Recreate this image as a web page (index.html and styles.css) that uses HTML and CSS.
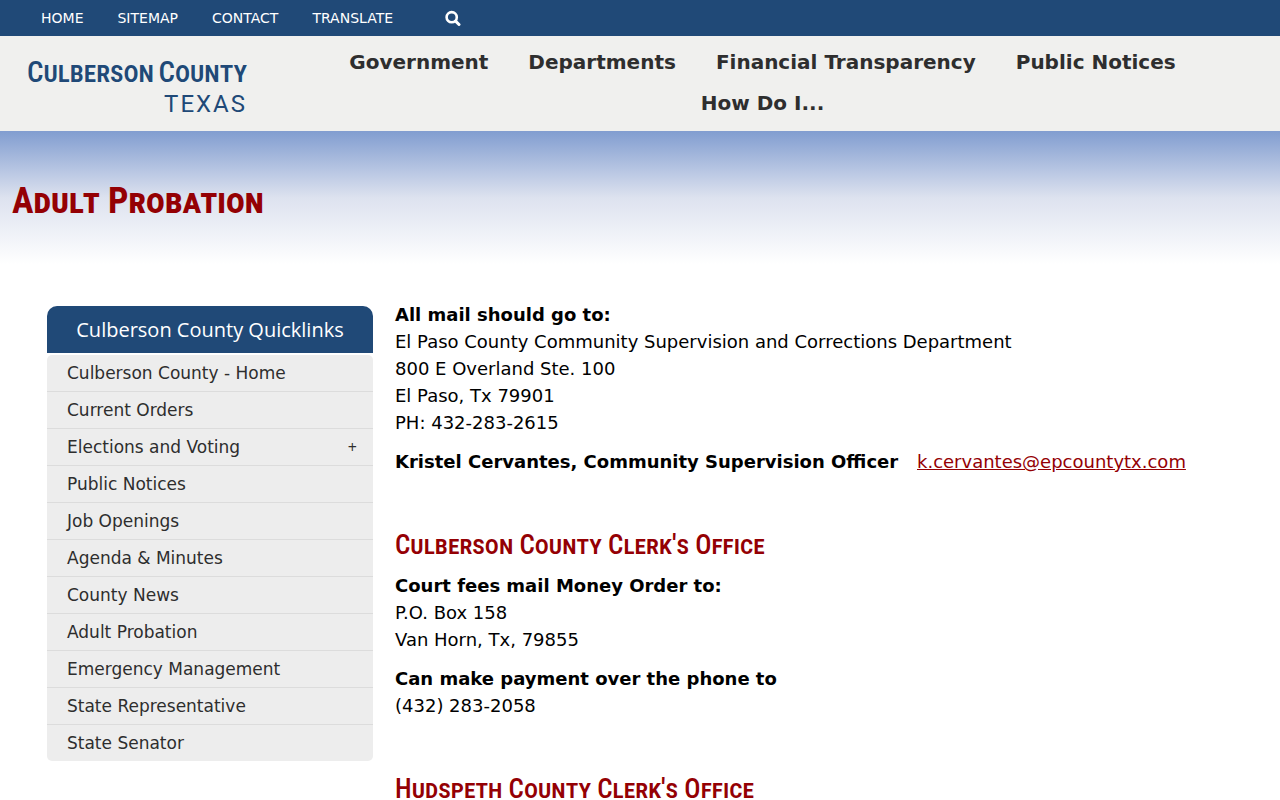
FILE: index.html
```html
<!DOCTYPE html>
<html lang="en">
<head>
<meta charset="utf-8">
<meta name="viewport" content="width=device-width, initial-scale=1">
<title>Adult Probation - Culberson County, Texas</title>
<link rel="stylesheet" href="styles.css">
</head>
<body>
<nav class="topbar" aria-label="Utility">
  <a href="#">HOME</a>
  <a href="#">SITEMAP</a>
  <a href="#">CONTACT</a>
  <a href="#">TRANSLATE</a>
  <button class="search" type="button" aria-label="Search">
    <svg viewBox="0 0 16 16" width="16" height="16" fill="none" stroke="currentColor" aria-hidden="true">
      <circle cx="6.7" cy="7.2" r="5.1" stroke-width="2.6"/>
      <path d="M10.6 11.1 14 14.5" stroke-width="3" stroke-linecap="round"/>
    </svg>
  </button>
</nav>
<header class="header">
  <a class="logo" href="#">
    <span class="logo-name"><span>Culberson</span><span>County</span></span>
    <span class="logo-state">TEXAS</span>
  </a>
  <nav class="mainnav" aria-label="Main">
    <a href="#">Government</a>
    <a href="#">Departments</a>
    <a href="#">Financial Transparency</a>
    <a href="#">Public Notices</a>
    <a href="#">How Do I...</a>
  </nav>
</header>
<div class="banner"><h1>Adult Probation</h1></div>
<div class="page">
  <aside class="sidebar">
    <h2 class="side-title">Culberson County Quicklinks</h2>
    <ul class="links">
      <li><a href="#">Culberson County - Home</a></li>
      <li><a href="#">Current Orders</a></li>
      <li><a href="#">Elections and Voting <span class="plus">+</span></a></li>
      <li><a href="#">Public Notices</a></li>
      <li><a href="#">Job Openings</a></li>
      <li><a href="#">Agenda &amp; Minutes</a></li>
      <li><a href="#">County News</a></li>
      <li><a href="#">Adult Probation</a></li>
      <li><a href="#">Emergency Management</a></li>
      <li><a href="#">State Representative</a></li>
      <li><a href="#">State Senator</a></li>
    </ul>
  </aside>
  <main class="content">
    <p><strong>All mail should go to:</strong><br>El Paso County Community Supervision and Corrections Department<br>800 E Overland Ste. 100<br>El Paso, Tx 79901<br>PH: 432-283-2615</p>
    <p><strong>Kristel Cervantes, Community Supervision Officer&nbsp;&nbsp; </strong><a href="mailto:k.cervantes@epcountytx.com">k.cervantes@epcountytx.com</a></p>
    <h2>Culberson County Clerk's Office</h2>
    <p><strong>Court fees mail Money Order to:</strong><br>P.O. Box 158<br>Van Horn, Tx, 79855</p>
    <p><strong>Can make payment over the phone to</strong><br>(432) 283-2058</p>
    <h2>Hudspeth County Clerk's Office</h2>
  </main>
</div>
</body>
</html>
```
FILE: styles.css
```css
* { box-sizing: border-box; }
body {
  margin: 0;
  background: #fff;
  color: #000;
  font: 18px/27px "DejaVu Sans", sans-serif;
}
a { text-decoration: none; color: inherit; }
.topbar {
  display: flex;
  align-items: center;
  gap: 34px;
  height: 36px;
  padding: 0 41px;
  background: #204977;
  color: #fff;
  font-size: 14px;
}
.search {
  display: flex;
  margin-left: 18px;
  padding: 0;
  border: 0;
  background: none;
  color: #fff;
}
.header {
  display: flex;
  min-height: 95px;
  padding: 6px 20px 7px 27px;
  background: #f0f0ee;
}
.logo {
  display: flex;
  flex-direction: column;
  align-items: flex-end;
  flex: none;
  width: 220px;
  padding-top: 8px;
  color: #204977;
}
.logo-name {
  display: flex;
  justify-content: space-between;
  width: 100%;
  font: small-caps 500 29px/44px "Roboto Condensed", Roboto, sans-serif;
}
.logo-state {
  font: 24px/20px Roboto, sans-serif;
  letter-spacing: 2px;
}
.mainnav {
  display: flex;
  flex-wrap: wrap;
  justify-content: center;
  align-content: flex-start;
  flex: 1;
  margin-left: 18px;
  color: #2e2e2e;
  font-size: 20px;
  font-weight: bold;
}
.mainnav a { padding: 0 20px; line-height: 41px; }
.banner {
  min-height: 139px;
  padding: 42px 12px 0;
  background: linear-gradient(#819dd0, #dde2ef 48%, #fff 96%);
}
h1, .content h2 {
  margin: 0;
  color: #940004;
  font-family: "Roboto Condensed", Roboto, sans-serif;
  font-variant: small-caps;
}
h1 { font-size: 36px; line-height: 56px; }
.page {
  display: grid;
  grid-template-columns: 326px 1fr;
  gap: 22px;
  padding: 31px 47px;
}
.sidebar { padding-top: 5px; }
.side-title {
  margin: 0 0 2px;
  padding: 10px;
  border-radius: 10px 10px 0 0;
  background: #204977;
  color: #fff;
  font: 20px/27px "Open Sans", sans-serif;
  text-align: center;
}
.links {
  margin: 0;
  padding: 0;
  list-style: none;
  border-radius: 5px;
  background: #ededed;
  color: #2e2e2e;
  font-size: 17px;
}
.links li + li { border-top: 1px solid #dcdcdc; }
.links a {
  display: flex;
  justify-content: space-between;
  padding: 0 16px 0 20px;
  line-height: 36px;
}
.plus { font: 16px/36px "Open Sans", sans-serif; }
.content p { margin: 0 0 12px; }
.content p a { color: #940004; text-decoration: underline; }
.content h2 {
  margin: 52px 0 9px;
  font-size: 27px;
  font-weight: 500;
  line-height: 36px;
}
```
